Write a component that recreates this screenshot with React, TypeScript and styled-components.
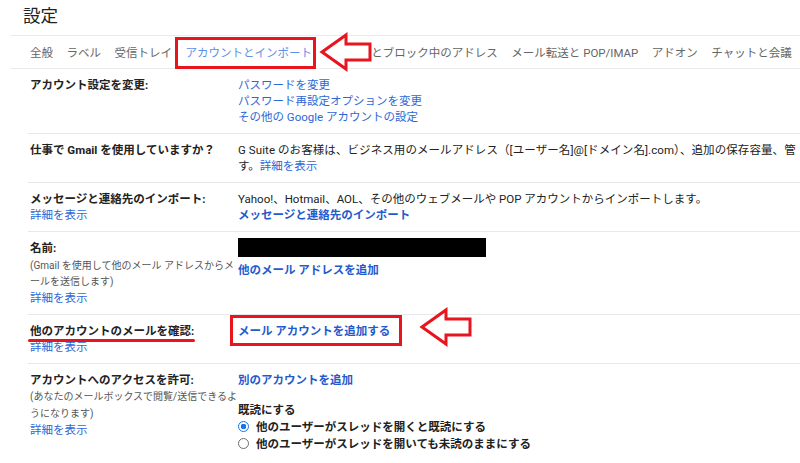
import React from 'react';
import styled, { createGlobalStyle } from 'styled-components';

const GlobalStyle = createGlobalStyle`
  html, body {
    margin: 0;
    background: #ffffff;
    overflow: hidden;
  }
  body {
    font-family: Roboto, "Noto Sans CJK JP", "Noto Sans", sans-serif;
    color: #202124;
  }
`;

const Page = styled.div`
  width: 800px;
  height: 463px;
  overflow: hidden;
`;

const Title = styled.h1`
  margin: 0;
  height: 35px;
  padding-left: 23px;
  font-size: 17.5px;
  font-weight: 400;
  line-height: 32px;
  color: #222;
`;

const TabBar = styled.nav`
  position: relative;
  display: flex;
  align-items: center;
  gap: 13.5px;
  height: 32px;
  margin-left: 10px;
  padding-left: 20px;
  border-top: 1px solid #ebebeb;
  border-bottom: 1px solid #ebebeb;
  white-space: nowrap;
`;

const Tab = styled.span<{ $active?: boolean }>`
  font-size: 11.5px;
  color: ${(p) => (p.$active ? '#5b8fe8' : '#666')};
`;

const MarkBox = styled.div<{ $left: number; $top: number; $w: number; $h: number }>`
  position: absolute;
  left: ${(p) => p.$left}px;
  top: ${(p) => p.$top}px;
  width: ${(p) => p.$w}px;
  height: ${(p) => p.$h}px;
  box-sizing: border-box;
  border: 3px solid #e8141e;
  pointer-events: none;
`;

const ArrowWrap = styled.svg<{ $left: number; $top: number }>`
  position: absolute;
  left: ${(p) => p.$left}px;
  top: ${(p) => p.$top}px;
  overflow: visible;
`;

const Underline = styled.div`
  position: absolute;
  left: 0;
  top: 24px;
  width: 167px;
  height: 3px;
  border-radius: 2px;
  background: #e8141e;
`;

const Settings = styled.div`
  padding-left: 28px;
`;

const Row = styled.div`
  position: relative;
  display: grid;
  grid-template-columns: 210px 1fr;
  padding: 8px 0;
  border-bottom: 1px solid #e8e8e8;
  font-size: 11.5px;
  line-height: 16px;

  &:last-child {
    border-bottom: none;
  }
`;

const Label = styled.div`
  padding-left: 2px;
  font-weight: 700;
  color: #222;
`;

const LabelText = styled.div`
  font-weight: 700;
`;

const Note = styled.div<{ $lh?: number; $gap?: number }>`
  margin-top: ${(p) => p.$gap ?? 0}px;
  font-size: 10px;
  font-weight: 400;
  line-height: ${(p) => p.$lh ?? 16}px;
  color: #555;
  white-space: nowrap;
`;

const Value = styled.div`
  white-space: nowrap;
  color: #222;
`;

const WideLine = styled.div`
  letter-spacing: 0.08px;
`;

const Link = styled.a<{ $bold?: boolean }>`
  color: ${(p) => (p.$bold ? '#1f5bcc' : '#2f67d6')};
  font-weight: ${(p) => (p.$bold ? 700 : 400)};
  text-decoration: none;
  cursor: pointer;
`;

const LinkLine = styled.div`
  color: #2f67d6;
  font-weight: 400;
`;

const Block = styled.div<{ $gap?: number }>`
  margin-top: ${(p) => p.$gap ?? 0}px;
`;

const Redacted = styled.div`
  width: 248px;
  height: 19px;
  margin-top: -2px;
  background: #000;
`;

const SubHead = styled.div`
  margin-top: 14px;
  font-weight: 700;
  color: #222;
  line-height: 16px;
`;

const RadioRow = styled.label`
  display: flex;
  align-items: center;
  gap: 7px;
  height: 17px;
  font-weight: 700;
  color: #222;
`;

const RadioDot = styled.span<{ $checked?: boolean }>`
  width: 11px;
  height: 11px;
  box-sizing: border-box;
  border-radius: 50%;
  border: 1.5px solid ${(p) => (p.$checked ? '#1a73e8' : '#6f6f6f')};
  background: ${(p) =>
    p.$checked ? 'radial-gradient(circle, #1a73e8 0 2.6px, #fff 3px)' : '#fff'};
`;

const Arrow = ({ left, top }: { left: number; top: number }) => (
  <ArrowWrap $left={left} $top={top} width={54} height={40} viewBox="0 0 54 40">
    <polygon
      points="3,20 27,3 27,12 51,12 51,28 27,28 27,37"
      fill="#fff"
      stroke="#e8141e"
      strokeWidth={3}
      strokeLinejoin="miter"
    />
  </ArrowWrap>
);

const tabs = [
  '全般',
  'ラベル',
  '受信トレイ',
  'アカウントとインポート',
  'フィルタとブロック中のアドレス',
  'メール転送と POP/IMAP',
  'アドオン',
  'チャットと会議',
];

export default function App() {
  return (
    <Page>
      <GlobalStyle />
      <Title>設定</Title>
      <TabBar>
        {tabs.map((t) => (
          <Tab key={t} $active={t === 'アカウントとインポート'}>
            {t}
          </Tab>
        ))}
        <MarkBox $left={165} $top={1} $w={141} $h={32} />
        <Arrow left={309} top={-4} />
      </TabBar>

      <Settings>
        <Row>
          <Label>アカウント設定を変更:</Label>
          <Value>
            <LinkLine>パスワードを変更</LinkLine>
            <LinkLine>パスワード再設定オプションを変更</LinkLine>
            <LinkLine>その他の Google アカウントの設定</LinkLine>
          </Value>
        </Row>

        <Row>
          <Label>仕事で Gmail を使用していますか？</Label>
          <Value>
            <WideLine>
              G Suite のお客様は、ビジネス用のメールアドレス（[ユーザー名]@[ドメイン名].com）、追加の保存容量、管
            </WideLine>
            <div>
              す。<Link>詳細を表示</Link>
            </div>
          </Value>
        </Row>

        <Row>
          <Label>
            <LabelText>メッセージと連絡先のインポート:</LabelText>
            <LinkLine>詳細を表示</LinkLine>
          </Label>
          <Value>
            <div>Yahoo!、Hotmail、AOL、その他のウェブメールや POP アカウントからインポートします。</div>
            <Link $bold>メッセージと連絡先のインポート</Link>
          </Value>
        </Row>

        <Row>
          <Label>
            <LabelText>名前:</LabelText>
            <Note $gap={2}>
              (Gmail を使用して他のメール アドレスからメ
              <br />
              ールを送信します)
            </Note>
            <LinkLine>詳細を表示</LinkLine>
          </Label>
          <Value>
            <Redacted />
            <Block $gap={5}>
              <Link $bold>他のメール アドレスを追加</Link>
            </Block>
          </Value>
        </Row>

        <Row>
          <Label>
            <LabelText>他のアカウントのメールを確認:</LabelText>
            <LinkLine>詳細を表示</LinkLine>
          </Label>
          <Value>
            <Link $bold>メール アカウントを追加する</Link>
          </Value>
          <Underline />
          <MarkBox $left={202} $top={0} $w={172} $h={31} />
          <Arrow left={391} top={-8} />
        </Row>

        <Row>
          <Label>
            <LabelText>アカウントへのアクセスを許可:</LabelText>
            <Note $lh={17}>
              (あなたのメールボックスで閲覧/送信できるよ
              <br />
              うになります)
            </Note>
            <LinkLine>詳細を表示</LinkLine>
          </Label>
          <Value>
            <Link $bold>別のアカウントを追加</Link>
            <SubHead>既読にする</SubHead>
            <RadioRow>
              <RadioDot $checked />
              他のユーザーがスレッドを開くと既読にする
            </RadioRow>
            <RadioRow>
              <RadioDot />
              他のユーザーがスレッドを開いても未読のままにする
            </RadioRow>
          </Value>
        </Row>
      </Settings>
    </Page>
  );
}
